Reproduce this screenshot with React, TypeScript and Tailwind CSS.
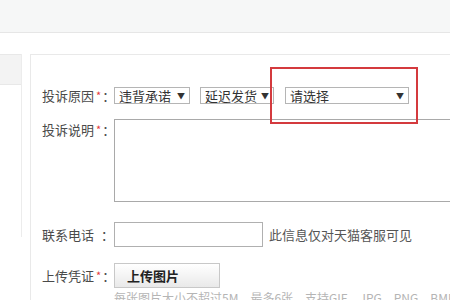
import React from 'react'

const font = { fontFamily: '"Noto Sans CJK SC", "Liberation Sans", sans-serif' }

function Label({ text, required = true }: { text: string; required?: boolean }) {
  return (
    <div className="w-[72px] shrink-0 flex items-center whitespace-nowrap text-[13px] text-[#4a4a4a] leading-none">
      <span>{text}</span>
      {required ? <span className="text-[#e4393c] text-[11px] ml-[2px]">*</span> : <span className="w-[10px]" />}
      <span className="ml-[1px]">：</span>
    </div>
  )
}

function FakeSelect({ text, w }: { text: string; w: string }) {
  return (
    <div className={`${w} h-[17px] border border-[#b5b5b5] bg-white flex items-center justify-between px-[4px] whitespace-nowrap text-[13px] text-[#333] leading-none`}>
      <span>{text}</span>
      <span className="text-[8px]">▼</span>
    </div>
  )
}

export default function App() {
  return (
    <div className="w-[450px] h-[300px] overflow-hidden relative bg-white" style={font}>
      {/* top strip */}
      <div className="h-[33px] bg-[#f6f7f7] border-b border-[#e6e6e6]" />

      <div className="flex">
        {/* left sidebar */}
        <div className="w-[22px] shrink-0 mt-[21px] h-[183px] border-r border-[#ececec]">
          <div className="h-[31px] bg-[#f3f3f3] border-y border-[#e8e8e8]" />
        </div>

        {/* main panel */}
        <div className="flex-1 ml-[8px] mt-[21px] border-l border-t border-[#e9e9e9] pl-[11px] pt-[32px] relative">
          {/* row 1 */}
          <div className="flex items-center h-[17px]">
            <Label text="投诉原因" />
            <div className="flex items-center gap-[10px]">
              <FakeSelect text="违背承诺" w="w-[76px]" />
              <FakeSelect text="延迟发货" w="w-[74px]" />
              <div className="ml-[1px]">
                <FakeSelect text="请选择" w="w-[124px]" />
              </div>
            </div>
          </div>

          {/* row 2 */}
          <div className="flex mt-[15px]">
            <div className="pt-[4px]">
              <Label text="投诉说明" />
            </div>
            <div className="w-[380px] h-[83px] shrink-0 border border-[#a9a9a9] border-r-0 bg-white" />
          </div>

          {/* row 3 */}
          <div className="flex items-center mt-[20px]">
            <Label text="联系电话" required={false} />
            <div className="w-[149px] h-[25px] border border-[#b0b0b0] bg-white" />
            <span className="ml-[6px] whitespace-nowrap text-[13px] text-[#555]">此信息仅对天猫客服可见</span>
          </div>

          {/* row 4 */}
          <div className="flex items-center mt-[16px]">
            <Label text="上传凭证" />
            <div className="w-[106px] h-[25px] border border-[#c8c8c8] bg-gradient-to-b from-[#ffffff] to-[#e9e9e9] flex items-center pl-[12px] text-[13px] font-bold text-[#222]">
              上传图片
            </div>
          </div>
          <div className="ml-[72px] mt-[1px] text-[12px] text-[#b5b5b5] whitespace-nowrap">
            每张图片大小不超过5M，最多6张，支持GIF，JPG，PNG，BMP
          </div>
        </div>
      </div>

      {/* red annotation box */}
      <div className="absolute left-[270px] top-[67px] w-[148px] h-[57px] border-2 border-[#d43a3e]" />
    </div>
  )
}
